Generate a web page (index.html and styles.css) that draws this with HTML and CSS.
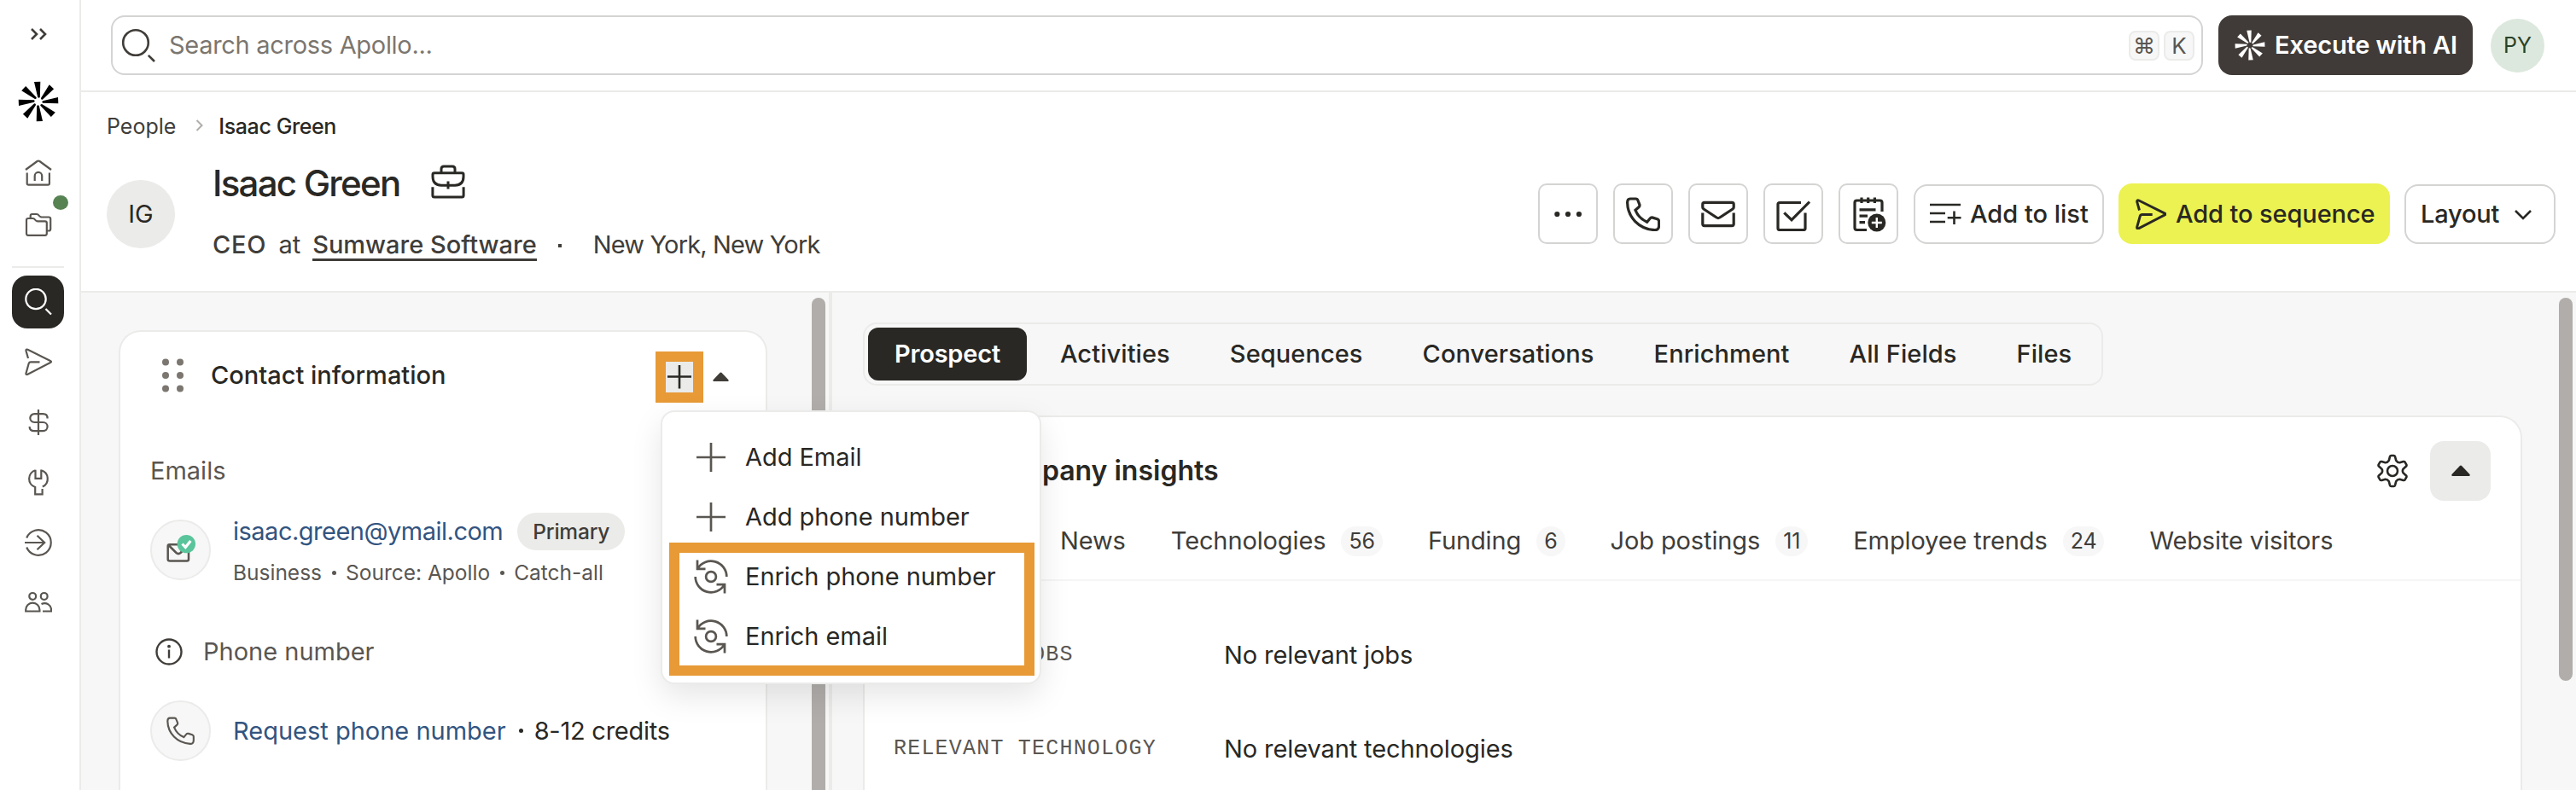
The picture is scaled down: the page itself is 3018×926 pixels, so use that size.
FILE: index.html
```html
<!DOCTYPE html>
<html lang="en">
<head>
    <meta charset="UTF-8">
    <title>Isaac Green</title>
    <link rel="stylesheet" href="styles.css">
</head>

<body>
    <!-- shared icons -->
    <svg class="defs">
        <symbol id="logo" viewBox="-24 -24 48 48">
            <path id="ray" d="M-5 -23L2.3 -23.3L1.8 -5Q.5 -3.5 -.8 -5Z"/>
            <use href="#ray" transform="rotate(45)"/>
            <use href="#ray" transform="rotate(90)"/>
            <use href="#ray" transform="rotate(135)"/>
            <use href="#ray" transform="rotate(180)"/>
            <use href="#ray" transform="rotate(225)"/>
            <use href="#ray" transform="rotate(270)"/>
            <use href="#ray" transform="rotate(315)"/>
        </symbol>
        <symbol id="send" viewBox="0 0 32 32">
            <path d="M4 12L1.5 3.2Q1.3 1 3.5 1.8L30 15Q32 16 30 17L3.5 30.8Q1 31.6 1.5 29.4L4.7 18Q5.2 16.4 7 16.4H17.5"/>
        </symbol>
        <symbol id="phone" viewBox="0 0 40 40">
            <path d="M4.8 2H11.5C13.2 2 13.6 2.8 14 4L15.8 8.6C16.3 10 16 10.8 15 11.7L11 15.3C13.5 21.5 18.5 26.5 24.6 29.2L28.2 25C29 24 30 23.7 31.3 24.1L36.6 25.7C38 26.2 38.6 27 38.6 28.3V33.5C38.6 37 36.8 38.8 33.5 38.6C15 37.5 2 23.5 1.6 6.5C1.6 3.6 2.4 2 4.8 2Z"/>
        </symbol>
        <symbol id="plus" viewBox="0 0 40 40">
            <path d="M20 3V37M3 20H37"/>
        </symbol>
        <symbol id="enrich" viewBox="0 0 40 40">
            <circle cx="20" cy="20" r="5.9"/>
            <path d="M4 .5V10.8H13.5M4.3 10.6A18.3 18.3 0 0 1 38.3 20M36 39.5V29.2H26.5M35.7 29.4A18.3 18.3 0 0 1 1.7 20"/>
        </symbol>
    </svg>

    <nav class="sidebar">
        <svg class="expand" width="20" height="16" viewBox="0 0 20 16"><path d="M2 2L8 8L2 14M12 2L18 8L12 14"/></svg>
        <svg class="brand" width="48" height="48"><use href="#logo"/></svg>
        <svg class="nav-icon home" viewBox="0 0 32 32"><path d="M1 12L14.6 2Q16 1 17.4 2L31 12M2.7 15.5V28Q2.7 29.7 4.4 29.7H27.2Q28.9 29.7 28.9 28V15.5M11.7 25V19.2A4.2 4.2 0 0 1 20.2 19.2V25"/></svg>
        <div class="folders">
            <svg class="nav-icon" viewBox="0 0 32 32"><path d="M2 11Q2 9 4 9H9.5Q11 9 12 10.5T15 12.3H23.8Q25.8 12.3 25.8 14.3V26.8Q25.8 28.8 23.8 28.8H4Q2 28.8 2 26.8ZM6.7 9V6Q6.7 4 8.7 4H14Q15.5 4 16.5 5.5T19.5 7.5H28.2Q30.2 7.5 30.2 9.5V21.5Q30.2 23.5 28.2 23.5H26"/></svg>
            <span class="badge-dot"></span>
        </div>
        <hr>
        <div class="nav-active"><svg class="nav-icon" viewBox="0 0 32 32"><circle cx="13" cy="12.5" r="11.7"/><path d="M24.5 24L31 30.5"/></svg></div>
        <svg class="nav-icon nav-send"><use href="#send"/></svg>
        <svg class="nav-icon" viewBox="0 0 32 32"><path d="M16 1V31M26.6 11.5C26.6 8 24.5 6.2 21.5 6.2H11.2A4.9 4.9 0 0 0 11.2 16H21.5A5.1 5.1 0 0 1 21.5 26.2H11C7.5 26.2 5.6 24.5 5.6 21"/></svg>
        <svg class="nav-icon" viewBox="0 0 32 32"><path d="M12.5 1.8V11.8H19.3V1.5M19.3 2.2A10.4 10.4 0 0 1 20.8 21.6M12.5 2.2A10.4 10.4 0 0 0 12.2 22V30.4H20.6V24"/></svg>
        <svg class="nav-icon" viewBox="0 0 32 32"><path d="M0 16H23.5M14.5 7.7L23.2 16L14.5 24.3M2.2 10.5A14.8 14.8 0 1 1 2.2 21.5"/></svg>
        <svg class="nav-icon" viewBox="0 0 32 32"><circle cx="9.2" cy="8.9" r="3.9"/><circle cx="22.7" cy="8.9" r="3.9"/><path d="M1.2 26.5V24.7A8.1 8.1 0 0 1 17.4 24.7V26.5ZM19.5 18C25.5 15.2 31 19.5 31 24.7V26.5H21"/></svg>
    </nav>

    <div class="main">
        <div class="topbar">
            <div class="search">
                <svg width="40" height="40" viewBox="0 0 40 40"><circle cx="17" cy="17" r="14.8"/><path d="M31.8 31.8L39 39"/></svg>
                <span class="placeholder">Search across Apollo...</span>
                <kbd>⌘</kbd><kbd>K</kbd>
            </div>
            <button class="execute"><svg width="36" height="36"><use href="#logo"/></svg>Execute with AI</button>
            <div class="user">PY</div>
        </div>

        <div class="profile">
            <div class="breadcrumb">
                <span>People</span>
                <svg width="9" height="14" viewBox="0 0 9 14"><path d="M1.5 1L7.5 7L1.5 13"/></svg>
                <span class="current">Isaac Green</span>
            </div>
            <div class="person">
                <div class="avatar">IG</div>
                <div class="person-text">
                    <div class="name">
                        <h1>Isaac Green</h1>
                        <svg width="40" height="40" viewBox="0 0 40 40"><path d="M12 9V5Q12 2 15 2H25Q28 2 28 5V9M4 9.8H36.2Q38 9.8 38 11.6V14Q38 24 28 24.2H12Q2 24 2 14V11.6Q2 9.8 4 9.8ZM20 19.5V28.5M1.9 26.3V36Q1.9 38 3.9 38H36.1Q38.1 38 38.1 36V26.3"/></svg>
                    </div>
                    <div class="role">
                        <b class="ceo">CEO</b><span class="at">at</span><b class="company">Sumware Software</b><span class="sep"></span><span class="place">New York, New York</span>
                    </div>
                </div>
                <div class="actions">
                    <button class="square"><svg width="40" height="40" viewBox="0 0 40 40"><g class="solid"><circle cx="7.3" cy="20" r="3.1"/><circle cx="20" cy="20" r="3.1"/><circle cx="32.9" cy="20" r="3.1"/></g></svg></button>
                    <button class="square"><svg width="40" height="40"><use href="#phone"/></svg></button>
                    <button class="square"><svg width="40" height="40" viewBox="0 0 40 40"><path d="M4 6.4H36Q38.2 6.4 38.2 8.5V12Q38.2 13.2 37 14L21.8 24Q20 25.1 18.2 24L3 14Q1.8 13.2 1.8 12V8.5Q1.8 6.4 4 6.4ZM1.8 18.5V31.5Q1.8 33.6 4 33.6H36Q38.2 33.6 38.2 31.5V18.5"/></svg></button>
                    <button class="square"><svg width="40" height="40" viewBox="0 0 40 40"><path d="M29 6.5H4Q2 6.5 2 8.5V36.5Q2 38.5 4 38.5H32Q34 38.5 34 36.5V18.5M9.3 18.3L18 26.8L39 5.5"/></svg></button>
                    <button class="square"><svg width="42" height="42" viewBox="0 0 42 42"><path d="M13 1.5V8M20.7 1.5V8M28.4 1.5V8M10.5 15.8H29.5M10.5 23.2H20M10.5 30.6H17M19 39.5H7.5Q5 39.5 5 37V7.5Q5 5 7.5 5H34.5Q37 5 37 7.5V18"/><circle class="solid" cx="30.8" cy="31" r="10.5"/><path class="white" d="M30.8 25V37M24.8 31H36.8"/></svg></button>
                    <button class="list"><svg width="38" height="26" viewBox="0 0 38 26"><path d="M0 2H36M0 12H18M0 22H18M28.5 9.5V25M20.7 17.3H36.5"/></svg>Add to list</button>
                    <button class="sequence"><svg width="36" height="36"><use href="#send"/></svg>Add to sequence</button>
                    <button class="layout">Layout<svg width="20" height="13" viewBox="0 0 20 13"><path d="M1 2L10 11L19 2"/></svg></button>
                </div>
            </div>
        </div>

        <div class="content">
            <div class="left-pane">
                <section class="contact-card">
                    <div class="card-head">
                        <svg class="grip" width="26" height="40" viewBox="0 0 26 40"><circle cx="4" cy="4.5" r="4"/><circle cx="21" cy="4.5" r="4"/><circle cx="4" cy="20" r="4"/><circle cx="21" cy="20" r="4"/><circle cx="4" cy="35.5" r="4"/><circle cx="21" cy="35.5" r="4"/></svg>
                        <h2>Contact information</h2>
                        <div class="add">
                            <button class="add-btn"><svg width="32" height="36" viewBox="0 0 32 36"><path d="M16 4V31.5M2 17.5H30"/></svg></button>
                            <div class="menu">
                                <div class="menu-item"><svg width="40" height="40"><use href="#plus"/></svg>Add Email</div>
                                <div class="menu-item"><svg width="40" height="40"><use href="#plus"/></svg>Add phone number</div>
                                <div class="menu-item"><svg width="40" height="40"><use href="#enrich"/></svg>Enrich phone number</div>
                                <div class="menu-item"><svg width="40" height="40"><use href="#enrich"/></svg>Enrich email</div>
                                <div class="highlight"></div>
                            </div>
                        </div>
                        <svg class="caret" width="19" height="11" viewBox="0 0 19 11"><path d="M1 11Q-.3 10.3.8 9L8.6 .8Q9.5 0 10.4 .8L18.2 9Q19.3 10.3 18 11Z"/></svg>
                    </div>

                    <div class="label">Emails</div>
                    <div class="entry email">
                        <svg class="round-icon" width="71" height="71" viewBox="0 0 71 71">
                            <circle class="ring" cx="35.5" cy="35.5" r="34.5"/>
                            <path d="M22.5 29.2H43Q45 29.2 45 31.2V46.5Q45 48.5 43 48.5H23Q20.7 48.5 20.7 46.5V31Q20.7 29.2 22.5 29.2M21.5 30L30.5 39Q33 41.2 35.5 39L39 35.5"/>
                            <circle class="ok" cx="42.3" cy="28.6" r="10.7"/>
                            <path class="tick" d="M37.5 28.5L41.3 32.5L47.3 25"/>
                        </svg>
                        <div>
                            <div class="email-line"><a>isaac.green@ymail.com</a><span class="pill">Primary</span></div>
                            <div class="meta"><span>Business</span><i></i><span>Source: Apollo</span><i></i><span>Catch-all</span></div>
                        </div>
                    </div>

                    <div class="label phone-label">
                        <svg width="32" height="32" viewBox="0 0 32 32"><circle cx="16" cy="16" r="14.5"/><path d="M16 13.5V23.5"/><circle class="solid" cx="16" cy="9.7" r="1.9"/></svg>
                        <span>Phone number</span>
                    </div>
                    <div class="entry phone-row">
                        <div class="round"><svg width="33" height="33"><use href="#phone"/></svg></div>
                        <a>Request phone number</a><i></i><span class="credits">8-12 credits</span>
                    </div>
                </section>
                <div class="scroll-thumb"></div>
            </div>

            <div class="right-pane">
                <div class="right-body">
                    <div class="tabs">
                        <div class="tab active">Prospect</div>
                        <div class="tab">Activities</div>
                        <div class="tab">Sequences</div>
                        <div class="tab">Conversations</div>
                        <div class="tab">Enrichment</div>
                        <div class="tab">All Fields</div>
                        <div class="tab">Files</div>
                    </div>
                    <section class="insights">
                        <div class="insights-head">
                            <h2>Company insights</h2>
                            <svg class="gear" width="40" height="40" viewBox="-20 -20 40 40"><path d="M-4.2 -12.2L-3 -16.8Q-2.6 -18 -1.5 -18H1.5Q2.6 -18 3 -16.8L4.2 -12.2Q6 -9.5 8.5 -9.7L12.6 -11Q14 -11.3 14.7 -10.2L16.3 -7.4Q16.8 -6.3 16 -5.4L12.7 -2.5Q11 0 12.7 2.5L16 5.4Q16.8 6.3 16.3 7.4L14.7 10.2Q14 11.3 12.6 11L8.5 9.7Q6 9.5 4.2 12.2L3 16.8Q2.6 18 1.5 18H-1.5Q-2.6 18 -3 16.8L-4.2 12.2Q-6 9.5 -8.5 9.7L-12.6 11Q-14 11.3 -14.7 10.2L-16.3 7.4Q-16.8 6.3 -16 5.4L-12.7 2.5Q-11 0 -12.7 -2.5L-16 -5.4Q-16.8 -6.3 -16.3 -7.4L-14.7 -10.2Q-14 -11.3 -12.6 -11L-8.5 -9.7Q-6 -9.5 -4.2 -12.2Z"/><circle r="6"/></svg>
                            <button class="collapse"><svg width="24" height="13" viewBox="0 0 19 11"><path d="M1 11Q-.3 10.3.8 9L8.6 .8Q9.5 0 10.4 .8L18.2 9Q19.3 10.3 18 11Z"/></svg></button>
                        </div>
                        <div class="subtabs">
                            <span>News</span>
                            <span>Technologies</span><em>56</em>
                            <span>Funding</span><em>6</em>
                            <span>Job postings</span><em>11</em>
                            <span>Employee trends</span><em>24</em>
                            <span>Website visitors</span>
                        </div>
                        <dl>
                            <dt>RELEVANT JOBS</dt><dd>No relevant jobs</dd>
                            <dt>RELEVANT TECHNOLOGY</dt><dd>No relevant technologies</dd>
                        </dl>
                    </section>
                </div>
                <div class="scroll-thumb"></div>
            </div>
        </div>
    </div>
</body>

</html>
```

FILE: styles.css
```css
* {
    box-sizing: border-box;
}

body {
    margin: 0;
    display: flex;
    width: 3018px;
    height: 926px;
    overflow: hidden;
    font-family: Inter, "Liberation Sans", sans-serif;
    font-size: 29px;
    line-height: 40px;
    white-space: nowrap;
    color: #292824;
    background: #fff;
}

h1, h2, dl, dd, dt {
    margin: 0;
    font-weight: 500;
}

button, kbd {
    font: inherit;
    color: inherit;
    background: none;
    padding: 0;
    margin: 0;
}

em, i {
    font-style: normal;
}

svg {
    display: block;
    flex: none;
    fill: none;
    stroke: currentColor;
    stroke-width: 2.6;
}

.solid {
    fill: currentColor;
    stroke: none;
}

.defs {
    position: absolute;
    width: 0;
    height: 0;
}

/* Sidebar */
.sidebar {
    flex: none;
    width: 95px;
    border-right: 2px solid #ebebea;
    display: flex;
    flex-direction: column;
    align-items: center;
    padding-right: 4px;
    color: #5a5651;
}

.expand {
    margin-top: 32px;
    color: #403d39;
}

.brand {
    margin-top: 47px;
    fill: #000;
    stroke: none;
}

.nav-icon {
    width: 32px;
    height: 32px;
    stroke-width: 2.2;
}

.home {
    margin-top: 44px;
}

.folders {
    position: relative;
    margin-top: 28px;
}

.badge-dot {
    position: absolute;
    left: 33px;
    top: -18px;
    width: 18px;
    height: 17px;
    border-radius: 50%;
    background: #578353;
}

.sidebar hr {
    width: 61px;
    height: 2px;
    margin: 33px 0 9px;
    border: 0;
    background: #ebebea;
}

.nav-active {
    width: 61px;
    height: 62px;
    border-radius: 18px;
    background: #292824;
    color: #fff;
    display: grid;
    place-items: center;
}

.nav-send {
    margin-top: 23px;
}

.nav-send ~ .nav-icon {
    margin-top: 38.5px;
}

/* Top bar */
.main {
    flex: 1;
    display: flex;
    flex-direction: column;
}

.topbar {
    flex: none;
    height: 108px;
    border-bottom: 2px solid #ebebea;
    padding: 0 37px 0 35px;
    display: flex;
    align-items: center;
}

.search {
    flex: 1;
    height: 70px;
    border: 2px solid #d4d4d3;
    border-radius: 16px;
    padding: 0 8px 0 10px;
    display: flex;
    align-items: center;
    color: #403d39;
}

.placeholder {
    flex: 1;
    margin-left: 16px;
    letter-spacing: -0.3px;
    color: #7b766f;
}

kbd {
    width: 36px;
    height: 35px;
    margin-left: 5px;
    border: 2px solid #ebebea;
    border-radius: 8px;
    background: #f7f7f7;
    font-size: 26px;
    line-height: 32px;
    text-align: center;
    color: #5a5651;
}

.execute {
    width: 298px;
    height: 70px;
    margin-left: 18px;
    border: 0;
    border-radius: 16px;
    background: #403b38;
    color: #fff;
    font-weight: 600;
    letter-spacing: -0.15px;
    display: flex;
    align-items: center;
    padding-left: 19px;
    gap: 11px;
}

.execute svg {
    fill: #fff;
    stroke: none;
}

.user {
    width: 63px;
    height: 63px;
    margin-left: 21px;
    border-radius: 50%;
    background: #dce8dd;
    color: #2a4227;
    font-size: 25px;
    display: grid;
    place-items: center;
}

/* Profile header */
.profile {
    flex: none;
    height: 235px;
    border-bottom: 2px solid #ebebea;
    padding: 20px 24px 0 30px;
}

.breadcrumb {
    display: flex;
    align-items: center;
    font-size: 25px;
    color: #403d39;
}

.breadcrumb svg {
    margin: 0 18px 2px 23px;
    color: #b0adaa;
    stroke-width: 2;
}

.breadcrumb .current {
    font-weight: 500;
    letter-spacing: -0.4px;
    color: #292824;
}

.person {
    display: flex;
    height: 165px;
    align-items: center;
}

.avatar {
    width: 80px;
    height: 80px;
    border-radius: 50%;
    background: #ebebe9;
    display: grid;
    place-items: center;
}

.person-text {
    flex: 1;
    margin-left: 44px;
}

.name {
    display: flex;
    align-items: center;
    height: 40px;
}

h1 {
    font-size: 42px;
    letter-spacing: -1.75px;
}

.name svg {
    margin-left: 37px;
    margin-bottom: 3px;
    stroke-width: 3;
}

.role {
    display: flex;
    margin-top: 32px;
    color: #403d39;
}

.role b {
    font-weight: 500;
}

.ceo {
    letter-spacing: 0.8px;
}

.at {
    margin: 0 14px;
}

.company {
    border-bottom: 3px solid #403d39;
    height: 39px;
}

.sep {
    width: 4px;
    height: 4px;
    margin: 19px 37px 0 25px;
    background: currentColor;
}

.place {
    letter-spacing: -0.85px;
}

.actions {
    display: flex;
    gap: 18px;
    align-items: flex-end;
}

.actions button {
    height: 70px;
    border: 2px solid #d4d4d3;
    border-radius: 16px;
    font-weight: 500;
    display: flex;
    align-items: center;
}

.actions .square {
    width: 70px;
    height: 71px;
    border-radius: 10px;
    justify-content: center;
}

.actions .square svg {
    stroke-width: 3.2;
}

.actions .square .white {
    stroke: #fff;
    stroke-width: 2.4;
}

.actions .list {
    width: 223px;
    padding-left: 17px;
    gap: 9px;
}

.actions .sequence {
    width: 318px;
    height: 71px;
    border: 0;
    background: #ebf251;
    padding-left: 20px;
    gap: 11px;
    margin-left: -1px;
    letter-spacing: -0.1px;
}

.actions .layout {
    width: 177px;
    padding: 0 26px 0 17px;
    justify-content: space-between;
    margin-left: -1px;
    letter-spacing: -0.2px;
}

/* Content panes */
.content {
    flex: 1;
    display: flex;
    min-height: 0;
    background: #f7f7f7;
}

.left-pane {
    flex: none;
    width: 880px;
    padding: 44px 4px 0 44px;
    border-right: 4px solid #ebebe9;
    display: flex;
    justify-content: space-between;
}

.contact-card {
    width: 760px;
    background: #fff;
    border: 2px solid #ebebea;
    border-bottom: 0;
    border-radius: 26px 26px 0 0;
}

.scroll-thumb {
    width: 16px;
    border-radius: 8px;
    background: #b0adaa;
}

.left-pane .scroll-thumb {
    height: 620px;
    margin-top: -38px;
}

.card-head {
    height: 101px;
    display: flex;
    align-items: center;
    padding-left: 49px;
}

.grip {
    fill: #7b766f;
    stroke: none;
}

.card-head h2 {
    flex: 1;
    font-size: 29px;
    margin-left: 31px;
}

.add {
    position: relative;
    margin-top: 4px;
}

.add-btn {
    display: block;
    width: 56px;
    height: 60px;
    border: 12px solid #e79a36;
    background: #ebebe9;
}

.caret {
    margin: 3px 43px 0 11px;
    fill: #403d39;
    stroke: none;
}

/* Dropdown opened from the add button */
.menu {
    position: absolute;
    z-index: 10;
    left: 6px;
    top: 69px;
    width: 446px;
    height: 321px;
    padding: 18px 0 0 37px;
    border: 2px solid #ebebea;
    border-radius: 16px;
    background: #fff;
    box-shadow: 0 14px 36px rgba(0, 0, 0, 0.1);
}

.menu-item {
    height: 70.2px;
    display: flex;
    align-items: center;
    gap: 20px;
    letter-spacing: -0.05px;
}

.menu-item svg {
    color: #5a5651;
    stroke-width: 2.7;
}

.highlight {
    position: absolute;
    left: 8px;
    top: 153px;
    width: 428px;
    height: 156px;
    border: 12px solid #e79a36;
}

.label {
    height: 40px;
    margin: 42px 0 0 35px;
    color: #5a5651;
    display: flex;
    align-items: center;
}

.entry {
    display: flex;
    align-items: center;
    padding-left: 35px;
}

.entry a {
    color: #33547f;
}

.email {
    height: 87px;
    margin-top: 29px;
}

.round-icon {
    margin-right: 26px;
    color: #5a5651;
    stroke-width: 2.5;
}

.ring {
    fill: #f7f7f7;
    stroke: #ebebea;
    stroke-width: 2;
}

.ok {
    fill: #5ac49b;
    stroke: none;
}

.tick {
    stroke: #fff;
    stroke-width: 3.2;
}

.email-line {
    display: flex;
    height: 44px;
    align-items: center;
}

.email-line a {
    letter-spacing: -0.5px;
}

.pill {
    width: 126px;
    height: 44px;
    margin-left: 17px;
    border-radius: 22px;
    background: #ebebe9;
    color: #403d39;
    font-size: 24.5px;
    font-weight: 500;
    letter-spacing: -0.2px;
    display: grid;
    place-items: center;
}

.meta {
    display: flex;
    align-items: center;
    height: 34px;
    margin-top: 9px;
    font-size: 24.5px;
    color: #5a5651;
}

.entry i {
    width: 5px;
    height: 5px;
    margin: 0 11.5px;
    border-radius: 50%;
    background: currentColor;
}

.phone-label {
    margin: 56px 0 0 41px;
    gap: 24px;
}

.phone-label svg {
    color: #403d39;
    stroke-width: 2.4;
}

.phone-row {
    margin-top: 37px;
}

.round {
    width: 71px;
    height: 71px;
    margin-right: 26px;
    border: 2px solid #ebebea;
    border-radius: 50%;
    background: #f7f7f7;
    color: #5a5651;
    display: grid;
    place-items: center;
}

.phone-row i {
    margin: 0 13px 0 15px;
}

.credits {
    letter-spacing: -0.25px;
}

/* Right pane */
.right-pane {
    flex: 1;
    display: flex;
    padding: 6px 4px 0 36px;
}

.right-pane .scroll-thumb {
    height: 449px;
}

.right-body {
    width: 1944px;
    margin-right: 43px;
    padding-top: 29px;
    display: flex;
    flex-direction: column;
}

.tabs {
    width: 1453px;
    height: 74px;
    border: 2px solid #ebebea;
    border-radius: 16px;
    padding: 4px;
    display: flex;
    gap: 8px;
    font-weight: 500;
    letter-spacing: 0.08px;
}

.tab {
    padding: 11px 31px;
    height: 62px;
    border-radius: 12px;
}

.tab.active {
    width: 186px;
    background: #292824;
    color: #fff;
    font-weight: 600;
    letter-spacing: -0.2px;
}

.insights {
    flex: 1;
    margin-top: 35px;
    background: #fff;
    border: 2px solid #ebebea;
    border-bottom: 0;
    border-radius: 26px 26px 0 0;
}

.insights-head {
    height: 125px;
    display: flex;
    align-items: center;
    padding: 0 35px 0 136px;
}

.insights h2 {
    flex: 1;
    font-size: 32px;
    font-weight: 600;
}

.collapse {
    width: 71px;
    height: 70px;
    margin-left: 24px;
    border: 0;
    border-radius: 16px;
    background: #ebebe9;
    display: grid;
    place-items: center;
}

.collapse svg {
    fill: #292824;
    stroke: none;
}

.subtabs {
    height: 67px;
    border-bottom: 2px solid #f5f5f5;
    padding-left: 229px;
    display: flex;
    color: #403d39;
    letter-spacing: -0.12px;
}

.subtabs span {
    margin-right: 53px;
}

.subtabs span:has(+ em) {
    margin-right: 18px;
}

.subtabs em {
    height: 35px;
    margin: 3px 53px 0 0;
    padding: 0 9px;
    border-radius: 18px;
    background: #f7f7f7;
    font-size: 25px;
    line-height: 35px;
}

dl {
    display: grid;
    grid-template-columns: 387px 1fr;
    grid-auto-rows: 110px;
    align-items: center;
    margin-top: 32px;
    padding-left: 34px;
}

dt {
    font-family: "Liberation Mono", monospace;
    font-size: 25px;
    font-weight: 400;
    letter-spacing: 1.2px;
    color: #5a5651;
}

dd {
    font-weight: 400;
    letter-spacing: -0.1px;
}
```
